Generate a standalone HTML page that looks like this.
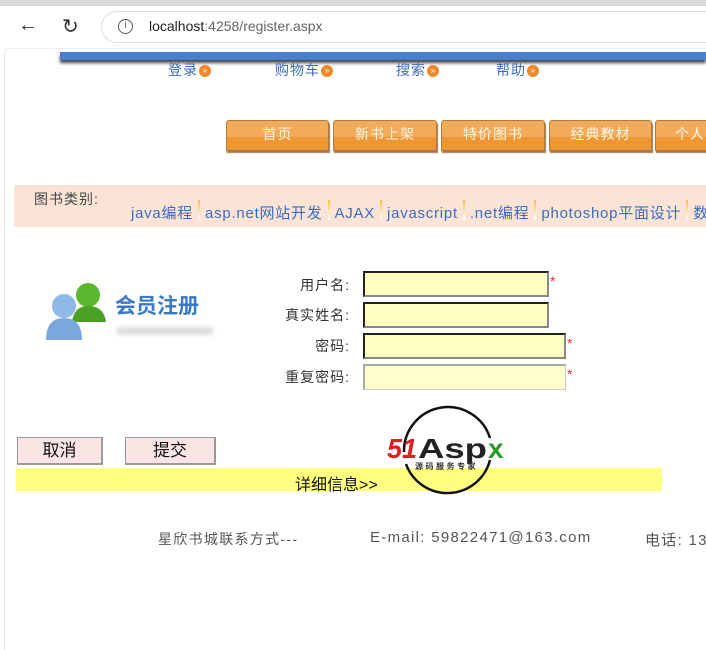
<!DOCTYPE html>
<html><head><meta charset="utf-8"><style>
*{margin:0;padding:0;box-sizing:border-box}
body{width:706px;height:650px;overflow:hidden;background:#fff;position:relative;font-family:"Liberation Sans","Noto Sans CJK SC",sans-serif;font-size:14px}
.a{position:absolute;white-space:nowrap}
.tl{color:#3a6cc0;font-size:14px;letter-spacing:1px}
.dot{display:inline-block;width:12px;height:12px;border-radius:50%;background:#ee8a2a;color:#fff;font-size:8px;line-height:12px;text-align:center;vertical-align:2px;margin-left:1px;letter-spacing:0}
.ob{position:absolute;top:120px;height:31px;background:linear-gradient(#f1ab5a 0,#f1ab5a 55%,#ee9632 56%,#ee9632 100%);border:1px solid #b07a3a;border-radius:3px 3px 0 0;box-shadow:1px 2px 1px #9a7a5a;color:#fff6e6;text-align:center;line-height:26px;font-size:14px;letter-spacing:1px}
.cat{color:#3a6cc0;font-size:15px;letter-spacing:0.75px}
.sep{display:inline-block;width:2px;height:20px;background:linear-gradient(#f4c040,#fff);vertical-align:-2px;margin:0 5px}
.lab{position:absolute;right:356px;color:#333;font-size:14px;letter-spacing:1px}
.in{position:absolute;left:363px;height:26px;background:#ffffc4;border:2px solid #222;border-right-color:#888;border-bottom-color:#888}
.st{position:absolute;color:#d33;font-size:14px}
.btn{position:absolute;top:437px;height:28px;background:#fbe4e4;border:1px solid #999;border-right-width:2px;border-bottom-width:2px;font-size:17px;text-align:center;line-height:26px;color:#111}
.ft{color:#555;font-size:15px;letter-spacing:1.3px}
</style></head><body>
<div class="a" style="left:0;top:0;width:706px;height:6px;background:#d9d9d9"></div>
<div class="a" style="left:0;top:6px;width:706px;height:42px;background:#fff"></div>
<div class="a" style="left:18px;top:14px;font-size:20px;color:#333">&#8592;</div>
<div class="a" style="left:62px;top:14px;font-size:20px;color:#333">&#8635;</div>
<div class="a" style="left:101px;top:11px;width:620px;height:32px;border:1px solid #ddd;border-radius:16px;background:#fff"></div>
<div class="a" style="left:118px;top:19px;width:15px;height:15px;border:1.5px solid #555;border-radius:50%;font-size:10px;line-height:12px;text-align:center;color:#555">i</div>
<div class="a" style="left:149px;top:18px;font-size:14px;color:#222">localhost<span style="color:#666">:4258/register.aspx</span></div>
<div class="a" style="left:4px;top:48px;width:702px;height:602px;border-left:1px solid #e8e8e8;border-top:1px solid #eee;border-radius:6px 0 0 0"></div>
<div class="a" style="left:60px;top:52px;width:646px;height:8px;background:#4a7fd0;box-shadow:0 3px 3px #444"></div>
<div class="a tl" style="left:168px;top:60px">登录<span class="dot">»</span></div>
<div class="a tl" style="left:275px;top:60px">购物车<span class="dot">»</span></div>
<div class="a tl" style="left:396px;top:60px">搜索<span class="dot">»</span></div>
<div class="a tl" style="left:496px;top:60px">帮助<span class="dot">»</span></div>
<div class="ob" style="left:226px;width:103px">首页</div>
<div class="ob" style="left:333px;width:104px">新书上架</div>
<div class="ob" style="left:441px;width:104px">特价图书</div>
<div class="ob" style="left:549px;width:103px">经典教材</div>
<div class="ob" style="left:655px;width:100px">个人中心</div>
<div class="a" style="left:14px;top:185px;width:692px;height:42px;background:#fbe4d6"></div>
<div class="a" style="left:34px;top:189px;color:#444;font-size:14px;letter-spacing:1px">图书类别:</div>
<div class="a cat" style="left:131px;top:200px">java编程<span class="sep"></span>asp.net网站开发<span class="sep"></span>AJAX<span class="sep"></span>javascript<span class="sep"></span>.net编程<span class="sep"></span>photoshop平面设计<span class="sep"></span>数据库</div>
<svg class="a" style="left:44px;top:278px" width="66" height="66" viewBox="0 0 66 66">
<circle cx="44" cy="17" r="12" fill="#5cb82e"/><path d="M28 44 Q30 28 44 28 Q60 28 62 44 Z" fill="#4aa024"/>
<circle cx="20" cy="28" r="12" fill="#8eb8e8"/><path d="M2 62 Q2 40 20 40 Q38 40 38 62 Z" fill="#7aa8de"/>
</svg>
<div class="a" style="left:115px;top:290px;font-size:21px;font-weight:bold;color:#3a78c8">会员注册</div>
<div class="a" style="left:116px;top:327px;width:98px;height:8px;border-radius:4px;background:#ddd;filter:blur(2px)"></div>
<div class="lab" style="top:275px">用户名:</div>
<div class="lab" style="top:305px">真实姓名:</div>
<div class="lab" style="top:336px">密码:</div>
<div class="lab" style="top:367px">重复密码:</div>
<div class="in" style="top:271px;width:186px"></div>
<div class="in" style="top:302px;width:186px"></div>
<div class="in" style="top:333px;width:203px"></div>
<div class="in" style="top:364px;width:203px;border:1px solid #ccc;border-left:2px solid #aaa;border-top:2px solid #aaa;background:#ffffcc"></div>
<div class="st" style="left:550px;top:273px">*</div>
<div class="st" style="left:567px;top:335px">*</div>
<div class="st" style="left:567px;top:366px">*</div>
<div class="btn" style="left:17px;width:86px">取消</div>
<div class="btn" style="left:125px;width:91px">提交</div>
<div class="a" style="left:16px;top:468px;width:646px;height:23px;background:#ffff80"></div>
<div class="a" style="left:295px;top:471px;font-size:16px;color:#111">详细信息&gt;&gt;</div>
<svg class="a" style="left:380px;top:400px" width="140" height="96" viewBox="0 0 140 96">
<path d="M24 52 A44 44 0 0 1 110 38" fill="none" stroke="#111" stroke-width="2.5"/>
<path d="M110 60 A44 44 0 0 1 26 64" fill="none" stroke="#111" stroke-width="2.5"/>
<text x="7" y="58" font-family="Liberation Sans,sans-serif" font-size="28" font-weight="bold" font-style="italic" fill="#e02020" textLength="30" lengthAdjust="spacingAndGlyphs">51</text>
<text x="38" y="58" font-family="Liberation Sans,sans-serif" font-size="28" font-weight="bold" fill="#222" textLength="69" lengthAdjust="spacingAndGlyphs">Asp</text>
<text x="108" y="58" font-family="Liberation Sans,sans-serif" font-size="28" font-weight="bold" fill="#2a9a2a">x</text>
<text x="35" y="69" font-family="Noto Sans CJK SC,sans-serif" font-size="8" font-weight="bold" fill="#333" letter-spacing="2.5">源码服务专家</text>
</svg>
<div class="a ft" style="left:158px;top:529px;font-size:14px">星欣书城联系方式---</div>
<div class="a ft" style="left:370px;top:529px">E-mail: 59822471@163.com</div>
<div class="a ft" style="left:645px;top:529px">电话: 13</div>
</body></html>
